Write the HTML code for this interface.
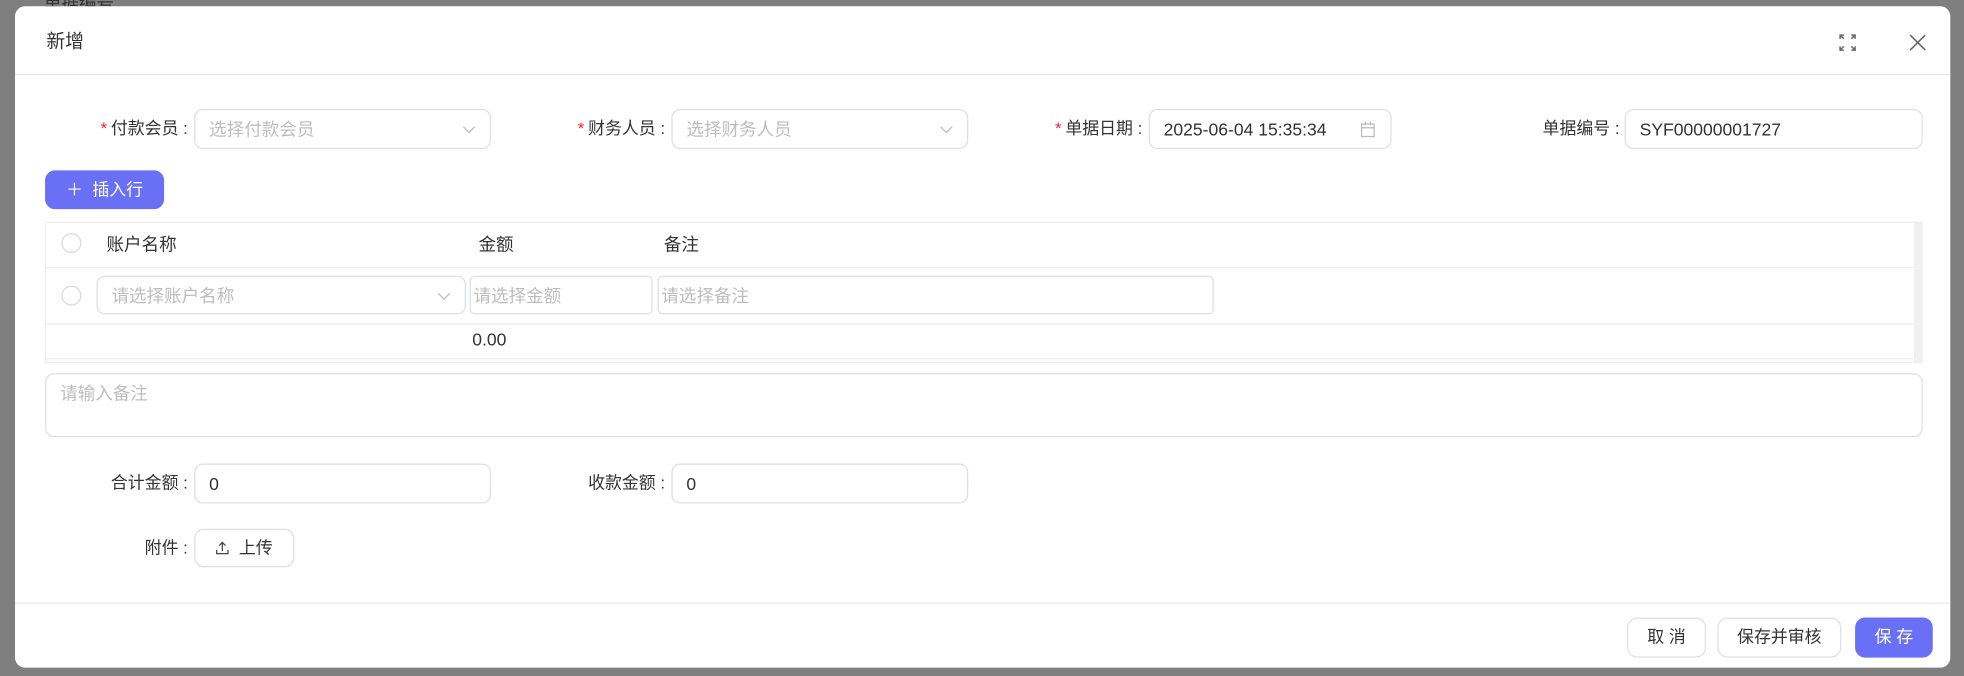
<!DOCTYPE html>
<html><head><meta charset="utf-8"><style>
*{box-sizing:border-box;margin:0;padding:0}
html,body{width:1964px;height:676px;overflow:hidden;background:#7f7f7f;font-family:"Liberation Sans","Noto Sans CJK SC",sans-serif}
#s{position:absolute;left:0;top:0;width:1568px;height:540px;transform:scale(1.2526);transform-origin:0 0;font-size:14px;color:#333}
.bgtxt{position:absolute;top:-8px;color:#333;font-size:14px}
.modal{position:absolute;left:12px;top:5px;width:1545px;height:528px;background:#fff;border-radius:8px}
.a{position:absolute}
.lbl{position:absolute;text-align:right;width:120px;line-height:32px;font-size:13.5px}
.lbl i{color:#f5222d;font-style:normal;margin-right:3px}
.inp{position:absolute;height:32px;border:1px solid #dcdfe6;border-radius:7px;line-height:30px;padding-left:11px;background:#fff}
.ph{color:#bdbdbd}
.arr{position:absolute;right:13px;top:10px;width:7px;height:7px;border-right:1px solid #bbb;border-bottom:1px solid #bbb;transform:rotate(45deg)}
.circ{position:absolute;width:16px;height:16px;border:1px solid #d9d9d9;border-radius:50%}
.btn{position:absolute;height:32px;border:1px solid #dcdfe6;border-radius:8px;text-align:center;line-height:30px;background:#fff;font-size:13.5px}
.pri{background:#6970f5;color:#fff;border-color:#6970f5}
</style></head><body><div id="s">
<div class="bgtxt" style="left:35px">单据编号：</div>
<div class="modal"></div>
<div class="a" style="left:12px;top:59px;width:1545px;height:1px;background:#e8e8e8"></div>
<div class="a" style="left:37px;top:22px;font-size:15px">新增</div>
<svg class="a" style="left:1467px;top:26px" width="16" height="16" viewBox="0 0 16 16" fill="none" stroke="#666" stroke-width="1.2"><path d="M2 5V2h3M2 2l3 3M14 5V2h-3M14 2l-3 3M2 11v3h3M2 14l3-3M14 11v3h-3M14 14l-3-3"/></svg>
<svg class="a" style="left:1524px;top:27px" width="14" height="14" viewBox="0 0 14 14" stroke="#666" stroke-width="1.3"><path d="M1 1l12 12M13 1L1 13"/></svg>

<div class="lbl" style="left:30px;top:87px"><i>*</i>付款会员 :</div>
<div class="inp ph" style="left:155px;top:87px;width:237px">选择付款会员<span class="arr"></span></div>
<div class="lbl" style="left:411px;top:87px"><i>*</i>财务人员 :</div>
<div class="inp ph" style="left:536px;top:87px;width:237px">选择财务人员<span class="arr"></span></div>
<div class="lbl" style="left:792px;top:87px"><i>*</i>单据日期 :</div>
<div class="inp" style="left:917px;top:87px;width:194px">2025-06-04 15:35:34
<svg style="position:absolute;right:12px;top:9px" width="12" height="13" viewBox="0 0 12 13" fill="none" stroke="#bbb"><rect x="1" y="2" width="10" height="10"/><path d="M1 5h10M4 0v3M8 0v3"/></svg></div>
<div class="lbl" style="left:1173px;top:87px">单据编号 :</div>
<div class="inp" style="left:1297px;top:87px;width:238px">SYF00000001727</div>

<div class="btn pri" style="left:36px;top:136px;width:95px;height:31px;line-height:29px">＋&nbsp; 插入行</div>

<div class="a" style="left:36px;top:177px;width:1499px;height:113px;border:1px solid #ebeef5"></div>
<div class="a" style="left:1528px;top:177px;width:7px;height:113px;background:#f0f0f0"></div>
<div class="a" style="left:36px;top:213px;width:1492px;height:1px;background:#ebeef5"></div>
<div class="a" style="left:36px;top:258px;width:1492px;height:1px;background:#ebeef5"></div>
<div class="a" style="left:36px;top:286px;width:1492px;height:1px;background:#ebeef5"></div>
<div class="circ" style="left:49px;top:186px"></div>
<div class="a" style="left:85px;top:185px">账户名称</div>
<div class="a" style="left:382px;top:185px">金额</div>
<div class="a" style="left:530px;top:185px">备注</div>
<div class="circ" style="left:49px;top:228px"></div>
<div class="inp ph" style="left:77px;top:220px;width:295px;height:31px">请选择账户名称<span class="arr"></span></div>
<div class="inp ph" style="left:375px;top:220px;width:146px;height:31px;padding-left:2px;border-radius:4px">请选择金额</div>
<div class="inp ph" style="left:525px;top:220px;width:444px;height:31px;padding-left:2px;border-radius:4px">请选择备注</div>
<div class="a" style="left:377px;top:263px">0.00</div>

<div class="inp ph" style="left:36px;top:298px;width:1499px;height:51px;line-height:30px;padding-left:11px">请输入备注</div>

<div class="lbl" style="left:30px;top:370px">合计金额 :</div>
<div class="inp" style="left:155px;top:370px;width:237px">0</div>
<div class="lbl" style="left:411px;top:370px">收款金额 :</div>
<div class="inp" style="left:536px;top:370px;width:237px">0</div>
<div class="lbl" style="left:30px;top:422px">附件 :</div>
<div class="btn" style="left:155px;top:422px;width:80px;height:31px;line-height:29px">
<svg style="vertical-align:-1px" width="11" height="11" viewBox="0 0 11 11" fill="none" stroke="#444"><path d="M1 7v3h9V7M5.5 8V1M3 3.5l2.5-2.5 2.5 2.5"/></svg>&nbsp; 上传</div>

<div class="a" style="left:12px;top:481px;width:1545px;height:1px;background:#e8e8e8"></div>
<div class="btn" style="left:1299px;top:493px;width:63px">取 消</div>
<div class="btn" style="left:1371px;top:493px;width:99px">保存并审核</div>
<div class="btn pri" style="left:1481px;top:493px;width:62px">保 存</div>
</div></body></html>
